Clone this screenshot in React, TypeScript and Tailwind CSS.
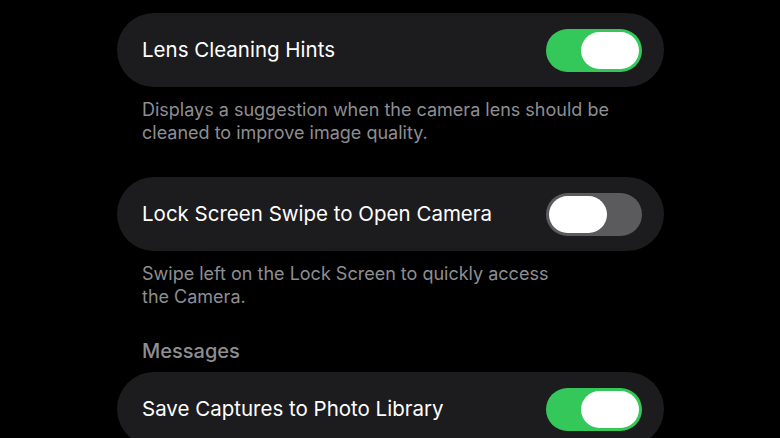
import React from "react";

function Toggle({ on }: { on: boolean }) {
  return (
    <div
      className={`flex h-[43px] w-[96px] shrink-0 items-center rounded-full p-[3px] ${
        on ? "justify-end bg-[#34c759]" : "justify-start bg-[#5b5b5e]"
      }`}
    >
      <div className="h-[37px] w-[58px] rounded-full bg-white" />
    </div>
  );
}

function Row({ label, on }: { label: string; on: boolean }) {
  return (
    <div className="flex h-[74px] items-center justify-between rounded-full bg-[#1c1c1e] pl-[25px] pr-[22px]">
      <span className="text-[20.5px] text-white">{label}</span>
      <Toggle on={on} />
    </div>
  );
}

function Footnote({ children }: { children: React.ReactNode }) {
  return (
    <p className="mt-[11px] pl-[25px] text-[18px] leading-[23px] text-[#8e8e93]">
      {children}
    </p>
  );
}

export default function App() {
  return (
    <div
      className="h-[438px] w-[780px] overflow-hidden bg-black pl-[117px] pt-[13px]"
      style={{ fontFamily: "Inter, 'Noto Sans', sans-serif" }}
    >
      <div className="w-[547px]">
        <Row label="Lens Cleaning Hints" on />
        <Footnote>
          Displays a suggestion when the camera lens should be
          <br />
          cleaned to improve image quality.
        </Footnote>

        <div className="mt-[33px]">
          <Row label="Lock Screen Swipe to Open Camera" on={false} />
        </div>
        <Footnote>
          Swipe left on the Lock Screen to quickly access
          <br />
          the Camera.
        </Footnote>

        <h2 className="mt-[31px] pl-[25px] text-[20px] font-medium leading-[24px] text-[#8e8e93]">
          Messages
        </h2>
        <div className="mt-[9px]">
          <Row label="Save Captures to Photo Library" on />
        </div>
      </div>
    </div>
  );
}
